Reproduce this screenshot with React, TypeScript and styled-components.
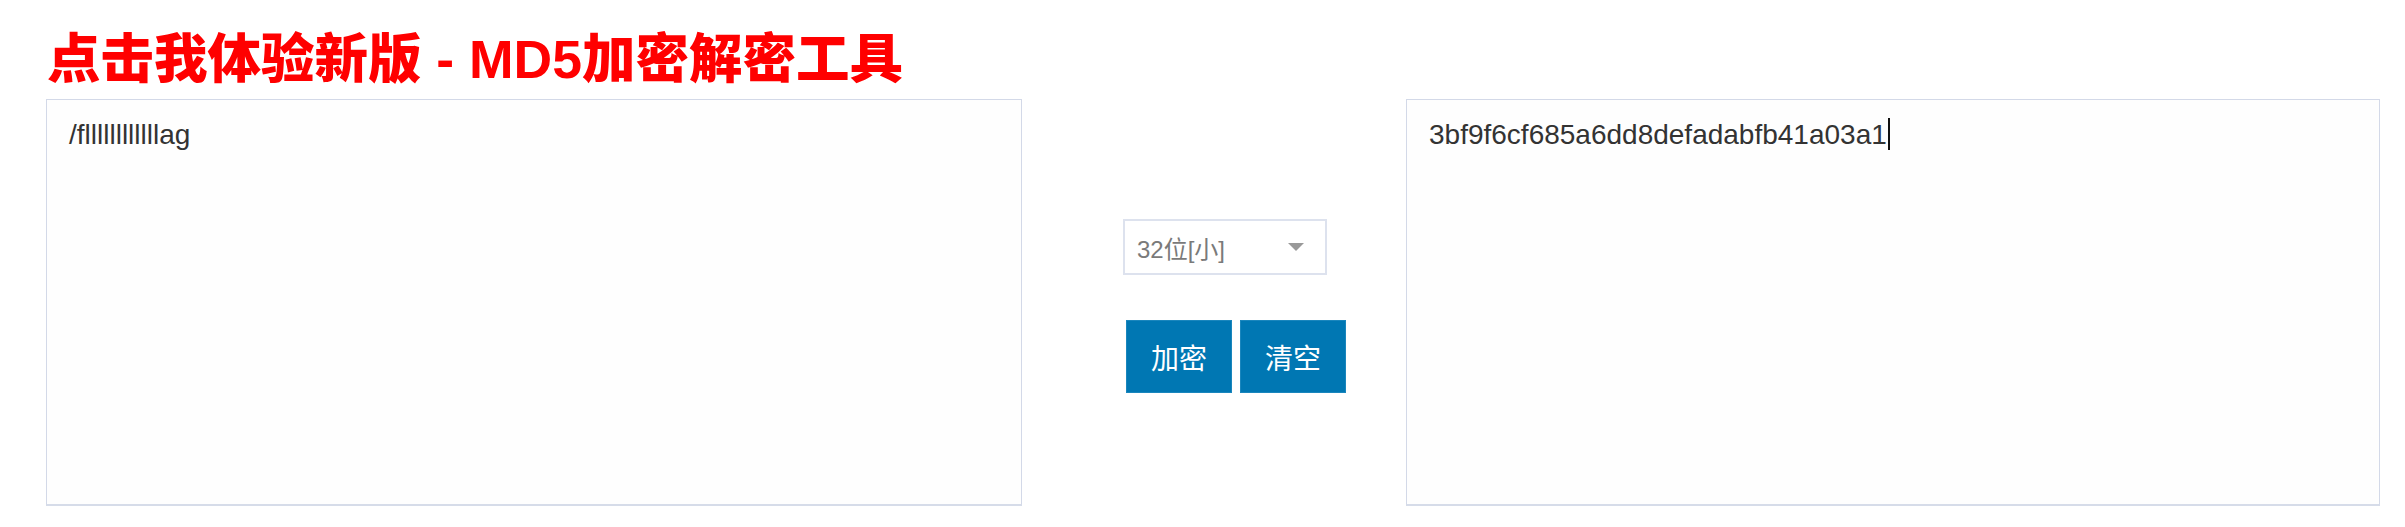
import styled, { createGlobalStyle } from "styled-components"

const GlobalStyle = createGlobalStyle`
  html, body {
    margin: 0;
    padding: 0;
    background: #ffffff;
  }
  body {
    font-family: "Liberation Sans", Arial, "Noto Sans CJK SC", sans-serif;
  }
`

const Page = styled.div`
  padding: 30px 0 0 46px;
  width: 2334px;
`

const Title = styled.a`
  display: block;
  margin: 0 0 9px 1px;
  font-family: "Liberation Sans", "Noto Sans CJK SC", sans-serif;
  font-size: 53.5px;
  font-weight: 900;
  line-height: 60px;
  color: #ff0000;
  text-decoration: none;
`

const Row = styled.div`
  display: flex;
  align-items: stretch;
`

const TextBox = styled.div<{ $width: number }>`
  box-sizing: border-box;
  width: ${(p) => p.$width}px;
  height: 407px;
  padding: 14px 22px;
  border: 1px solid #d3d9e8;
  border-bottom: 2px solid #d6dce9;
  background: #fefefe;
  font-family: "Liberation Sans", Arial, sans-serif;
  font-size: 28px;
  line-height: 42px;
  color: #333333;
  word-break: break-all;
`

const Caret = styled.span`
  display: inline-block;
  width: 2px;
  height: 32px;
  margin-left: 1px;
  vertical-align: -6px;
  background: #111111;
`

const Middle = styled.div`
  width: 384px;
  display: flex;
  flex-direction: column;
  align-items: flex-start;
  padding: 120px 0 0 101px;
  box-sizing: border-box;
`

const Select = styled.div`
  box-sizing: border-box;
  width: 204px;
  height: 56px;
  display: flex;
  align-items: center;
  justify-content: space-between;
  padding: 0 21px 0 12px;
  border: 2px solid #dde2ee;
  background: #ffffff;
  font-family: "Liberation Sans", Arial, "Noto Sans CJK SC", sans-serif;
  font-size: 24px;
  color: #7a7a7a;
`

const Arrow = styled.span`
  width: 0;
  height: 0;
  border-left: 8px solid transparent;
  border-right: 8px solid transparent;
  border-top: 8px solid #999999;
`

const Buttons = styled.div`
  display: flex;
  gap: 8px;
  margin: 45px 0 0 3px;
`

const Button = styled.button`
  width: 106px;
  height: 73px;
  border: 1px solid #1a86bd;
  background: #0077b3;
  color: #ffffff;
  font-family: "Noto Sans CJK SC", sans-serif;
  font-size: 28px;
  font-weight: 400;
  padding: 0;
  cursor: pointer;
`

const App = () => (
  <>
    <GlobalStyle />
    <Page>
      <Title href="#">点击我体验新版 - MD5加密解密工具</Title>
      <Row>
        <TextBox $width={976}>/fllllllllllllag</TextBox>
        <Middle>
          <Select>
            <span>32位[小]</span>
            <Arrow />
          </Select>
          <Buttons>
            <Button>加密</Button>
            <Button>清空</Button>
          </Buttons>
        </Middle>
        <TextBox $width={974}>
          3bf9f6cf685a6dd8defadabfb41a03a1
          <Caret />
        </TextBox>
      </Row>
    </Page>
  </>
)

export default App
